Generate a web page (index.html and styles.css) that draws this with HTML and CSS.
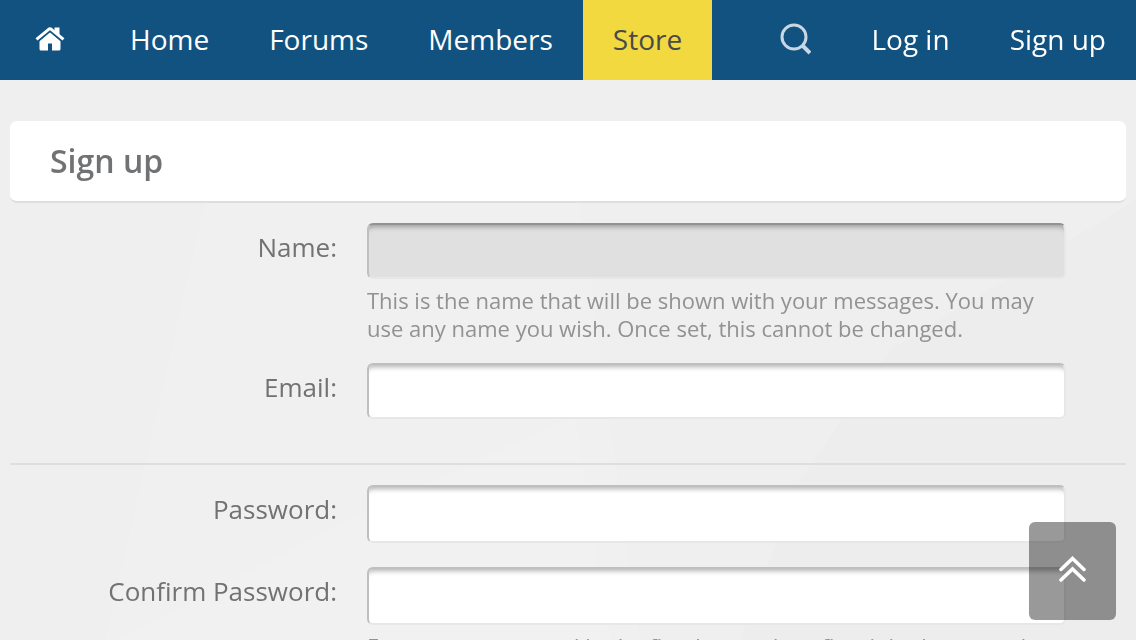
FILE: index.html
```html
<!DOCTYPE html>
<html lang="en">
<head>
  <meta charset="UTF-8">
  <meta name="viewport" content="width=device-width, initial-scale=1.0">
  <title>Sign up</title>
  <link rel="stylesheet" href="styles.css">
</head>
<body>

<svg class="backdrop" viewBox="0 0 1136 640" preserveAspectRatio="none" aria-hidden="true">
  <polygon points="205,200 580,200 640,640 105,640" fill="#f0f0f0"/>
  <polygon points="115,640 340,525 575,415 610,640" fill="#f1f1f1"/>
  <polygon points="740,640 800,480 890,350 1136,200 1136,640" fill="#ededed"/>
</svg>

<nav class="navbar">
  <a href="#" class="nav-icon" aria-label="Start page">
    <svg width="30" height="24" viewBox="0 0 30 24" fill="#fff">
      <path d="M19.500 0.500 H24.500 V11 L19.500 6 Z"/>
      <path d="M15 5 L25.500 14 V22 Q25.500 23.500 24 23.500 H17 V16.500 H13 V23.500 H6 Q4.500 23.500 4.500 22 V14 Z"/>
      <path d="M1.500 14 L13.800 3.800 Q15 2.900 16.200 3.800 L28.500 14" fill="none" stroke="#125280" stroke-width="4"/>
      <path d="M1.500 12.300 L13.700 2.300 Q15 1.300 16.300 2.300 L28.500 12.300" fill="none" stroke="#fff" stroke-width="3"/>
    </svg>
  </a>
  <a href="#">Home</a>
  <a href="#">Forums</a>
  <a href="#">Members</a>
  <a href="#" class="active">Store</a>
  <div class="spacer"></div>
  <a href="#" class="search" aria-label="Search">
    <svg width="32" height="32" viewBox="0 0 32 32" fill="none" stroke="#c9d7e2" stroke-width="3">
      <circle cx="15" cy="14" r="12"/>
      <path d="M23.500 22.500 L31 30" stroke-width="4"/>
    </svg>
  </a>
  <a href="#">Log in</a>
  <a href="#">Sign up</a>
</nav>

<main class="content">
  <h1 class="title">Sign up</h1>

  <form>
    <div class="group">
      <div class="row">
        <label for="name">Name:</label>
        <div class="field">
          <input type="text" id="name" class="focused">
          <p class="hint">This is the name that will be shown with your messages. You may use any name you wish. Once set, this cannot be changed.</p>
        </div>
      </div>
      <div class="row">
        <label for="email">Email:</label>
        <div class="field">
          <input type="email" id="email">
        </div>
      </div>
    </div>

    <div class="group passwords">
      <div class="row">
        <label for="password">Password:</label>
        <div class="field">
          <input type="password" id="password">
        </div>
      </div>
      <div class="row">
        <label for="confirm">Confirm Password:</label>
        <div class="field">
          <input type="password" id="confirm">
          <p class="hint">Enter your password in the first box and confirm it in the second.</p>
        </div>
      </div>
    </div>
  </form>
</main>

<button type="button" class="to-top" aria-label="Back to top">
  <svg width="28" height="28" viewBox="0 0 28 28" fill="none" stroke="#fff" stroke-width="3.500" stroke-linecap="round">
    <path d="M2 13.500 L13.500 2.500 L25 13.500"/>
    <path d="M2 24 L13.500 13 L25 24"/>
  </svg>
</button>

<script>
  document.querySelector(".to-top").addEventListener("click", function () {
    window.scrollTo(0, 0);
  });
</script>

</body>
</html>
```

FILE: styles.css
```css
* { box-sizing: border-box; }
body {
  margin: 0;
  background: #efefef;
  color: #717274;
  font-family: "Open Sans", sans-serif;
}
.backdrop {
  position: fixed;
  inset: 0;
  width: 100%;
  height: 100%;
  z-index: -1;
}

/* navigation */
.navbar {
  display: flex;
  height: 80px;
  background: #125280;
}
.navbar a {
  display: flex;
  align-items: center;
  padding: 0 30px 2px;
  color: #fff;
  font-size: 28px;
  text-decoration: none;
}
.navbar .nav-icon { padding: 0 35px 2px; }
.navbar .active {
  background: #f2d940;
  color: #4a4a4a;
}
.spacer { flex: 1; }

/* form */
.content { padding: 41px 10px 20px; }
.title {
  margin: 0 0 20px;
  padding: 0 40px;
  background: #fff;
  border-bottom: 2px solid #dedede;
  border-radius: 7px;
  font-size: 32px;
  font-weight: 600;
  line-height: 80px;
}
.group { padding-bottom: 24px; }
.row {
  display: grid;
  grid-template-columns: 327fr 699fr;
  column-gap: 30px;
  padding-right: 60px;
  margin-bottom: 20px;
}
.passwords {
  border-top: 2px solid #dedede;
  padding-top: 20px;
}
.passwords .row { margin-bottom: 24px; }
.row label {
  font-size: 26px;
  line-height: 48px;
  text-align: right;
}
.field input {
  display: block;
  width: 100%;
  height: 56px;
  padding: 8px;
  background: #fff;
  border: 2px solid #e7e7e7;
  border-top-color: #bfbfbf;
  border-left-color: #bfbfbf;
  border-radius: 6px;
  box-shadow: inset 0 7px 5px -5px rgba(0, 0, 0, 0.3);
  color: #717274;
  font: inherit;
  font-size: 26px;
  outline: none;
}
.passwords input { height: 58px; }
.field .focused {
  background: #e0e0e0;
  border-top-color: #929292;
}
.hint {
  margin: 0;
  padding: 7px 0 1px;
  color: #929292;
  font-size: 22px;
  line-height: 28px;
}

.to-top {
  position: fixed;
  right: 20px;
  bottom: 20px;
  display: flex;
  align-items: center;
  justify-content: center;
  width: 87px;
  height: 98px;
  padding: 0 0 2px;
  background: rgba(0, 0, 0, 0.4);
  border: none;
  border-radius: 6px;
  cursor: pointer;
}
```
